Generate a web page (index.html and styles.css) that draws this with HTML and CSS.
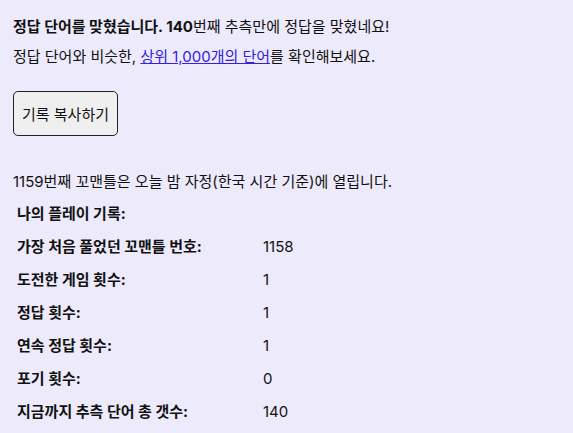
FILE: index.html
```html
<!DOCTYPE html>
<html lang="ko">
<head>
<meta charset="utf-8">
<link rel="stylesheet" href="styles.css">
</head>
<body>
<div class="page">
  <p class="result"><b>정답 단어를 맞혔습니다. 140</b>번째 추측만에 정답을 맞혔네요!<br>정답 단어와 비슷한, <a class="link" href="#">상위 1,000개의 단어</a>를 확인해보세요.</p>
  <button class="copy" type="button">기록 복사하기</button>
  <p class="next">1159번째 꼬맨틀은 오늘 밤 자정(한국 시간 기준)에 열립니다.</p>
  <table class="stats">
    <tr><th colspan="2">나의 플레이 기록:</th></tr>
    <tr><th>가장 처음 풀었던 꼬맨틀 번호:</th><td>1158</td></tr>
    <tr><th>도전한 게임 횟수:</th><td>1</td></tr>
    <tr><th>정답 횟수:</th><td>1</td></tr>
    <tr><th>연속 정답 횟수:</th><td>1</td></tr>
    <tr><th>포기 횟수:</th><td>0</td></tr>
    <tr><th>지금까지 추측 단어 총 갯수:</th><td>140</td></tr>
  </table>
</div>
</body>
</html>
```
FILE: styles.css
```css
html, body {
  margin: 0;
  padding: 0;
  background: #edeafb;
}
body {
  font-family: Inter, "Noto Sans CJK KR", sans-serif;
  font-size: 15px;
  line-height: 30px;
  color: #111;
}
.page {
  padding: 12px 13px 0;
}
.result {
  margin: 0;
}
.result b {
  font-weight: 700;
}
.link {
  color: #3420e0;
  text-decoration: underline;
}
.copy {
  display: block;
  margin-top: 19px;
  height: 45px;
  padding: 0 8px;
  font-family: Inter, "Noto Sans CJK KR", sans-serif;
  font-size: 15px;
  color: #111;
  background: #efefef;
  border: 1px solid #222;
  border-radius: 5px;
}
.next {
  margin: 31px 0 0;
}
.stats {
  border-spacing: 2px;
  margin-top: -1px;
}
.stats th, .stats td {
  height: 31px;
  padding: 0 2px;
  text-align: left;
  font-weight: 400;
  line-height: 20px;
}
.stats th {
  font-weight: 700;
  width: 240px;
}
```
